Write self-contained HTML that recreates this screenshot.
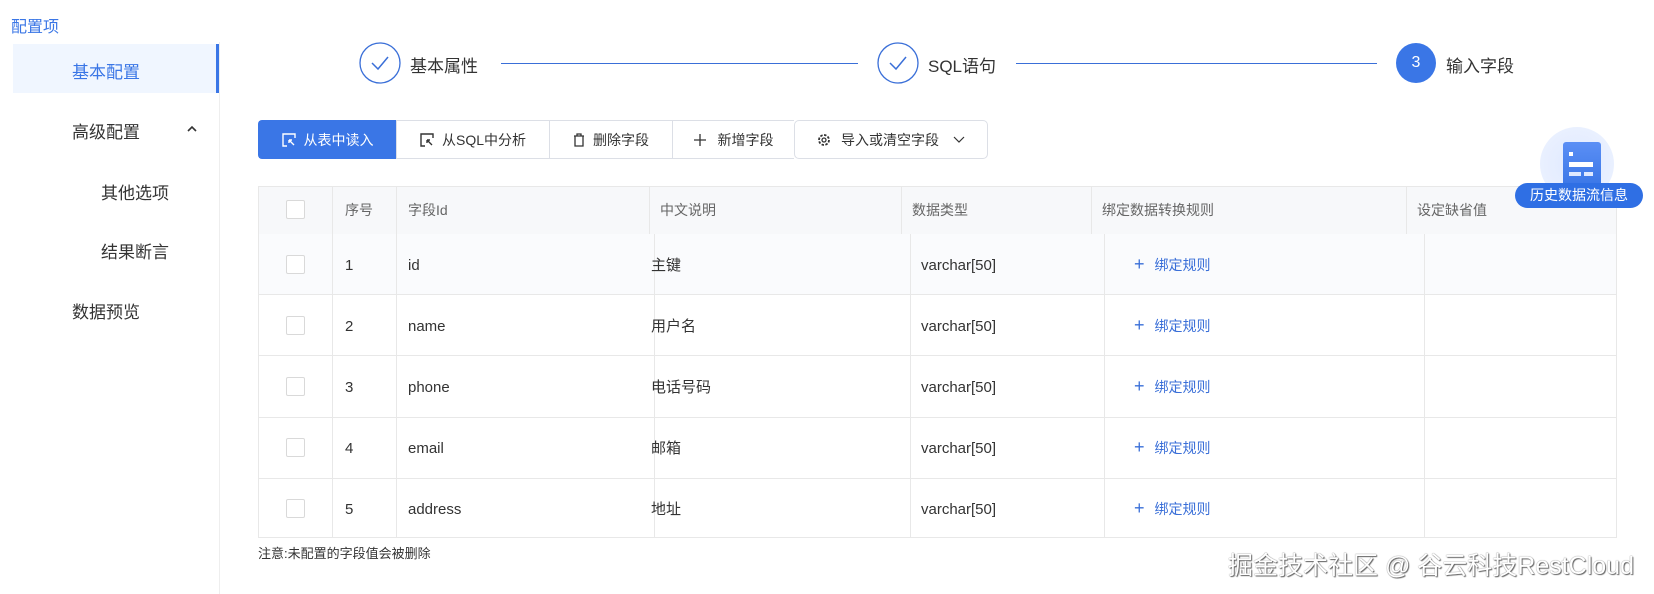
<!DOCTYPE html>
<html><head><meta charset="utf-8"><style>
*{box-sizing:border-box;margin:0;padding:0}
body{width:1654px;height:594px;background:#fff;font-family:"Liberation Sans","Noto Sans CJK SC",sans-serif;color:#333;position:relative;overflow:hidden;font-size:15px}
.a{position:absolute;white-space:nowrap}
.sb{position:absolute;left:219px;top:42px;width:1px;height:552px;background:#eee}
.btn{position:absolute;top:120px;height:39px;border:1px solid #dcdfe6;border-right:none;display:flex;align-items:center;justify-content:center;font-size:14px;color:#333;background:#fff;gap:8px}
.hl{position:absolute;height:1px;background:#e8e8e8}
.vl{position:absolute;width:1px;background:#e8e8e8}
.cb{position:absolute;width:19px;height:19px;border:1px solid #d9d9d9;border-radius:2px;background:#fff}
.t{position:absolute;font-size:15px;line-height:20px;height:20px;color:#333;white-space:nowrap;margin-top:2px}
.h{position:absolute;font-size:14px;line-height:20px;color:#666;white-space:nowrap;top:200px}
.lk{position:absolute;color:#3a6fd8;font-size:14px;line-height:20px;white-space:nowrap}
</style></head><body>
<div class="a" style="left:11px;top:13px;color:#3a76e6;font-size:16px">配置项</div>
<div class="a" style="left:13px;top:44px;width:206px;height:49px;background:#f0f6ff;border-right:3px solid #3a76e6"></div>
<div class="a" style="left:72px;top:58px;color:#3a76e6;font-size:17px">基本配置</div>
<div class="sb"></div>
<div class="a" style="left:72px;top:118px;font-size:17px">高级配置</div>
<svg class="a" style="left:186px;top:124px" width="12" height="10"><path d="M2 7 L6 3 L10 7" fill="none" stroke="#333" stroke-width="1.6"/></svg>
<div class="a" style="left:101px;top:179px;font-size:17px">其他选项</div>
<div class="a" style="left:101px;top:238px;font-size:17px">结果断言</div>
<div class="a" style="left:72px;top:298px;font-size:17px">数据预览</div>

<svg class="a" style="left:358px;top:41px" width="44" height="44"><circle cx="22" cy="22" r="20" fill="#fff" stroke="#3a6fd8" stroke-width="1.3"/><path d="M14 22 L20 28 L30 16" fill="none" stroke="#3a6fd8" stroke-width="1.5"/></svg>
<div class="a" style="left:410px;top:52px;font-size:17px">基本属性</div>
<div class="a" style="left:501px;top:63px;width:357px;height:1px;background:#3a6fd8"></div>
<svg class="a" style="left:876px;top:41px" width="44" height="44"><circle cx="22" cy="22" r="20" fill="#fff" stroke="#3a6fd8" stroke-width="1.3"/><path d="M14 22 L20 28 L30 16" fill="none" stroke="#3a6fd8" stroke-width="1.5"/></svg>
<div class="a" style="left:928px;top:52px;font-size:17px">SQL语句</div>
<div class="a" style="left:1016px;top:63px;width:361px;height:1px;background:#3a6fd8"></div>
<div class="a" style="left:1396px;top:43px;width:40px;height:40px;border-radius:50%;background:#3a76e6;color:#fff;font-size:16px;text-align:center;line-height:40px">3</div>
<div class="a" style="left:1446px;top:52px;font-size:17px">输入字段</div>

<div class="btn" style="left:258px;width:138px;background:#3a76e6;border-color:#3a76e6;color:#fff;border-radius:4px 0 0 4px"><svg width="14" height="14"><path d="M5 13H1V1H13V5M7 7L12 12M7 7H10M7 7V10" fill="none" stroke="#fff" stroke-width="1.4"/></svg>从表中读入</div>
<div class="btn" style="left:396px;width:153px"><svg width="14" height="14"><path d="M5 13H1V1H13V5M7 7L12 12M7 7H10M7 7V10" fill="none" stroke="#333" stroke-width="1.4"/></svg>从SQL中分析</div>
<div class="btn" style="left:549px;width:123px"><svg width="12" height="14"><path d="M1 3H11M4 3V1H8V3M2 3V13H10V3" fill="none" stroke="#333" stroke-width="1.3"/></svg>删除字段</div>
<div class="btn" style="left:672px;width:122px;gap:12px"><svg width="12" height="12"><path d="M6 0V12M0 6H12" stroke="#333" stroke-width="1.3"/></svg>新增字段</div>
<div class="btn" style="left:794px;width:194px;border-right:1px solid #dcdfe6;border-radius:5px;gap:10px"><svg width="14" height="14"><circle cx="7" cy="7" r="5" fill="none" stroke="#333" stroke-width="1.8" stroke-dasharray="2.5 1.4"/><circle cx="7" cy="7" r="2" fill="none" stroke="#333" stroke-width="1.3"/></svg>导入或清空字段<svg width="12" height="8" style="margin-left:4px"><path d="M1 1L6 6L11 1" fill="none" stroke="#333" stroke-width="1.2"/></svg></div>

<div class="a" style="left:258px;top:186px;width:1359px;height:352px;border:1px solid #e8e8e8"></div>
<div class="a" style="left:259px;top:187px;width:1357px;height:107px;background:#f7f8fa"></div>
<div class="a" style="left:259px;top:234px;width:1357px;height:60px;background:#fafbfd"></div>
<div class="hl" style="left:258px;top:294px;width:1359px"></div>
<div class="hl" style="left:258px;top:355px;width:1359px"></div>
<div class="hl" style="left:258px;top:417px;width:1359px"></div>
<div class="hl" style="left:258px;top:478px;width:1359px"></div>
<div class="vl" style="left:332px;top:186px;height:352px"></div>
<div class="vl" style="left:396px;top:186px;height:352px"></div>
<div class="vl" style="left:649px;top:186px;height:48px"></div>
<div class="vl" style="left:901px;top:186px;height:48px"></div>
<div class="vl" style="left:1091px;top:186px;height:48px"></div>
<div class="vl" style="left:1406px;top:186px;height:48px"></div>
<div class="vl" style="left:654px;top:234px;height:304px"></div>
<div class="vl" style="left:910px;top:234px;height:304px"></div>
<div class="vl" style="left:1104px;top:234px;height:304px"></div>
<div class="vl" style="left:1424px;top:234px;height:304px"></div>

<div class="cb" style="left:286px;top:200px"></div>
<div class="h" style="left:345px">序号</div><div class="h" style="left:408px">字段Id</div><div class="h" style="left:660px">中文说明</div><div class="h" style="left:912px">数据类型</div><div class="h" style="left:1102px">绑定数据转换规则</div><div class="h" style="left:1417px">设定缺省值</div>

<div class="cb" style="left:286px;top:255px"></div><div class="t" style="left:345px;top:254px">1</div><div class="t" style="left:408px;top:254px">id</div><div class="t" style="left:651px;top:254px">主键</div><div class="t" style="left:921px;top:254px">varchar[50]</div><div class="lk" style="left:1134px;top:254px"><span style="font-size:18px;margin-right:10px">+</span>绑定规则</div>
<div class="cb" style="left:286px;top:316px"></div><div class="t" style="left:345px;top:315px">2</div><div class="t" style="left:408px;top:315px">name</div><div class="t" style="left:651px;top:315px">用户名</div><div class="t" style="left:921px;top:315px">varchar[50]</div><div class="lk" style="left:1134px;top:315px"><span style="font-size:18px;margin-right:10px">+</span>绑定规则</div>
<div class="cb" style="left:286px;top:377px"></div><div class="t" style="left:345px;top:376px">3</div><div class="t" style="left:408px;top:376px">phone</div><div class="t" style="left:651px;top:376px">电话号码</div><div class="t" style="left:921px;top:376px">varchar[50]</div><div class="lk" style="left:1134px;top:376px"><span style="font-size:18px;margin-right:10px">+</span>绑定规则</div>
<div class="cb" style="left:286px;top:438px"></div><div class="t" style="left:345px;top:437px">4</div><div class="t" style="left:408px;top:437px">email</div><div class="t" style="left:651px;top:437px">邮箱</div><div class="t" style="left:921px;top:437px">varchar[50]</div><div class="lk" style="left:1134px;top:437px"><span style="font-size:18px;margin-right:10px">+</span>绑定规则</div>
<div class="cb" style="left:286px;top:499px"></div><div class="t" style="left:345px;top:498px">5</div><div class="t" style="left:408px;top:498px">address</div><div class="t" style="left:651px;top:498px">地址</div><div class="t" style="left:921px;top:498px">varchar[50]</div><div class="lk" style="left:1134px;top:498px"><span style="font-size:18px;margin-right:10px">+</span>绑定规则</div>

<div class="a" style="left:258px;top:543px;font-size:13px;color:#333">注意:未配置的字段值会被删除</div>
<div class="a" style="left:1228px;top:546px;font-size:25px;color:#fff;text-shadow:0 0 1px #555,1px 1px 1px #666">掘金技术社区 @ 谷云科技RestCloud</div>

<div class="a" style="left:1540px;top:127px;width:74px;height:74px;border-radius:50%;background:radial-gradient(circle,#dfe9ff,#eef3ff)"></div>
<div class="a" style="left:1563px;top:142px;width:38px;height:45px;background:linear-gradient(#5b8ff5,#3a76e6);border-radius:3px"></div>
<div class="a" style="left:1569px;top:152px;width:4px;height:4px;background:#fff"></div>
<div class="a" style="left:1569px;top:162px;width:24px;height:5px;background:#fff"></div>
<div class="a" style="left:1569px;top:172px;width:12px;height:4px;background:#dfe9ff"></div>
<div class="a" style="left:1584px;top:172px;width:9px;height:4px;background:#dfe9ff"></div>
<div class="a" style="left:1515px;top:183px;width:128px;height:25px;border-radius:13px;background:#2f6fe4;color:#fff;font-size:14px;text-align:center;line-height:25px">历史数据流信息</div>
</body></html>
